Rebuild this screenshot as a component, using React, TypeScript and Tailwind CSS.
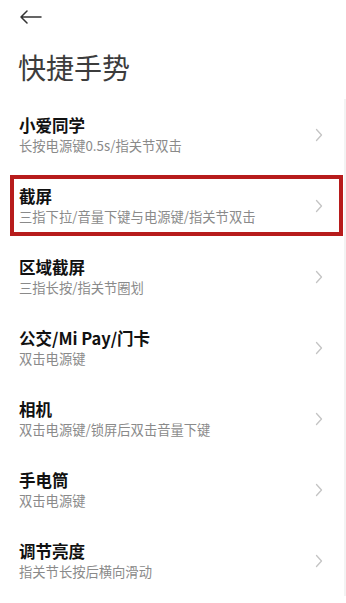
const items = [
  { title: "小爱同学", desc: "长按电源键0.5s/指关节双击" },
  { title: "截屏", desc: "三指下拉/音量下键与电源键/指关节双击", marked: true },
  { title: "区域截屏", desc: "三指长按/指关节圈划" },
  { title: "公交/Mi Pay/门卡", desc: "双击电源键" },
  { title: "相机", desc: "双击电源键/锁屏后双击音量下键" },
  { title: "手电筒", desc: "双击电源键" },
  { title: "调节亮度", desc: "指关节长按后横向滑动" },
];

function Chevron() {
  return (
    <svg width="8" height="14" viewBox="0 0 8 14" fill="none" className="shrink-0">
      <path d="M1.5 1.5 L6.5 7 L1.5 12.5" stroke="#c4c4c4" strokeWidth="1.3" strokeLinecap="round" strokeLinejoin="round" />
    </svg>
  );
}

export default function App() {
  return (
    <div
      className="w-[346px] h-[603px] bg-white overflow-hidden"
      style={{ fontFamily: '"Noto Sans CJK SC", "Noto Sans", sans-serif' }}
    >
      <div className="pt-[10px] pl-[19px]">
        <svg width="24" height="14" viewBox="0 0 24 14" fill="none">
          <path d="M22 7 H2 M8 1 L2 7 L8 13" stroke="#333" strokeWidth="1.5" strokeLinecap="round" strokeLinejoin="round" />
        </svg>
      </div>
      <h1 className="mt-[25px] mb-[14px] pl-[18px] text-[28px] leading-[36px] font-normal text-[#3c3c3c]">
        快捷手势
      </h1>
      <div className="border-r-2 border-[#f3f3f3]">
        {items.map((item) => (
          <div key={item.title} className="relative h-[71px] flex items-center pl-[19px] pr-[21px]">
            <div className="flex-1 min-w-0">
              <div className="text-[16.5px] leading-[20px] font-bold text-[#111]">{item.title}</div>
              <div className="mt-[2px] text-[13.3px] leading-[18px] text-[#8a8a8a] whitespace-nowrap">{item.desc}</div>
            </div>
            <Chevron />
            {item.marked && (
              <div className="absolute left-[10px] right-[1px] top-[5px] bottom-[5px] border-4 border-[#b71c1c]" />
            )}
          </div>
        ))}
      </div>
    </div>
  );
}
